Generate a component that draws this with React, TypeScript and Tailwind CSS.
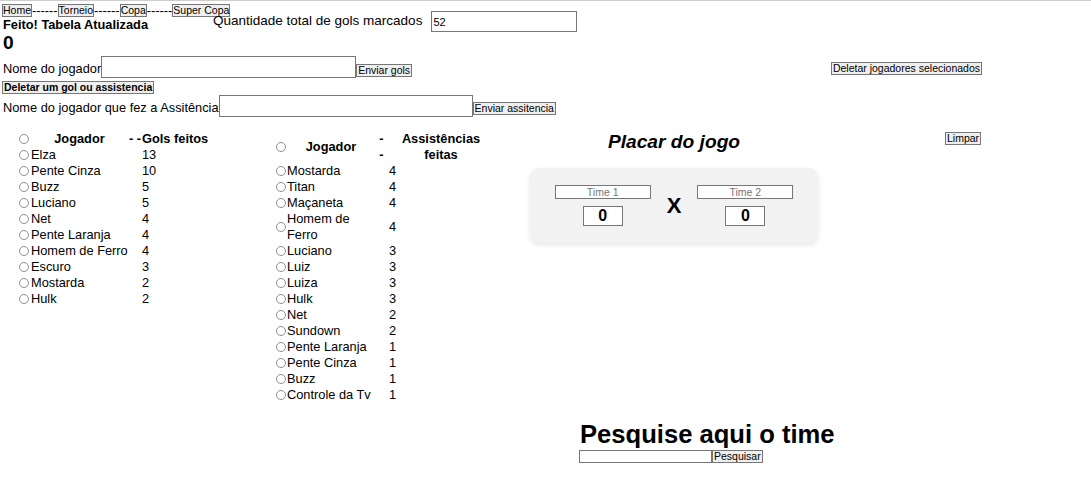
import type { ReactNode } from "react";

const GOLS: [string, number][] = [
  ["Elza", 13],
  ["Pente Cinza", 10],
  ["Buzz", 5],
  ["Luciano", 5],
  ["Net", 4],
  ["Pente Laranja", 4],
  ["Homem de Ferro", 4],
  ["Escuro", 3],
  ["Mostarda", 2],
  ["Hulk", 2],
];

const ASSISTS: [string, number][] = [
  ["Mostarda", 4],
  ["Titan", 4],
  ["Maçaneta", 4],
  ["Homem de Ferro", 4],
  ["Luciano", 3],
  ["Luiz", 3],
  ["Luiza", 3],
  ["Hulk", 3],
  ["Net", 2],
  ["Sundown", 2],
  ["Pente Laranja", 1],
  ["Pente Cinza", 1],
  ["Buzz", 1],
  ["Controle da Tv", 1],
];

function Btn({
  children,
  className = "",
  tight = false,
}: {
  children: ReactNode;
  className?: string;
  tight?: boolean;
}) {
  return (
    <button
      type="button"
      className={`h-[13px] shrink-0 ${tight ? "px-0" : "px-px"} border border-[#767676] bg-[#efefef] text-[10.5px] leading-[11px] text-black whitespace-nowrap ${className}`}
    >
      {children}
    </button>
  );
}

function Radio() {
  return <span className="block w-[10px] h-[10px] rounded-full border border-[#8f8f8f] bg-white" />;
}

function TeamBox({ label }: { label: string }) {
  return (
    <div className="flex flex-col items-center gap-[7px]">
      <input
        readOnly
        placeholder={label}
        className="w-[96px] h-[14px] border border-[#767676] bg-white text-center text-[10.5px] leading-[12px] placeholder:text-[#757575]"
      />
      <input
        readOnly
        defaultValue="0"
        className="w-[40px] h-[20px] border border-[#767676] bg-white text-center text-[16px] font-bold leading-[18px]"
      />
    </div>
  );
}

export default function App() {
  return (
    <div className="w-[1091px] min-h-[498px] bg-white border-t border-[#cccccc] font-['Liberation_Sans',Arial,sans-serif] text-[12.8px] text-black">
      {/* topo */}
      <div className="flex">
        <div className="w-[210px] shrink-0">
          <nav className="mt-[3px] ml-[2px] flex items-center h-[13px] whitespace-nowrap">
            <Btn tight>Home</Btn>
            <span>------</span>
            <Btn tight>Torneio</Btn>
            <span>------</span>
            <Btn tight>Copa</Btn>
            <span>------</span>
            <Btn tight>Super Copa</Btn>
          </nav>
          <div className="mt-px pl-[3px] font-bold leading-[14px]">Feito! Tabela Atualizada</div>
          <div className="pl-[3px] text-[19.2px] font-bold leading-[22px]">0</div>
        </div>
        <div className="ml-[3px] mt-[10px] flex items-center h-[21px]">
          <span className="text-[13.5px] mr-[9px] whitespace-nowrap">Quantidade total de gols marcados</span>
          <input
            readOnly
            defaultValue="52"
            className="w-[146px] h-[21px] border border-[#767676] bg-white pl-px text-[11px]"
          />
        </div>
      </div>

      {/* formulario */}
      <div className="mt-[2px] flex w-[982px] items-end">
        <span className="leading-[15px] mb-[2px] pl-[3px] whitespace-nowrap">Nome do jogador</span>
        <input readOnly className="w-[255px] h-[22px] border border-[#767676] bg-white" />
        <Btn className="mb-px">Enviar gols</Btn>
        <Btn className="ml-auto self-start mt-[6px]">Deletar jogadores selecionados</Btn>
      </div>
      <div className="mt-[3px] pl-[2px] flex">
        <Btn className="font-bold">Deletar um gol ou assistencia</Btn>
      </div>
      <div className="mt-px flex items-end">
        <span className="leading-[15px] mb-[2px] pl-[3px] whitespace-nowrap">
          Nome do jogador que fez a Assitência
        </span>
        <input readOnly className="w-[254px] h-[22px] border border-[#767676] bg-white" />
        <Btn className="mb-[2px]">Enviar assitencia</Btn>
      </div>

      {/* tabelas + placar */}
      <div className="mt-[14px] flex items-start">
        <div className="ml-[18px] grid grid-cols-[12px_99px_13px_70px] items-center leading-[16px] shrink-0">
          <div className="pl-px"><Radio /></div>
          <div className="font-bold text-center">Jogador</div>
          <div className="font-bold whitespace-nowrap">- -</div>
          <div className="font-bold whitespace-nowrap">Gols feitos</div>
          {GOLS.map(([nome, n]) => (
            <div key={nome} className="contents">
              <div className="pl-px"><Radio /></div>
              <div className="pl-px">{nome}</div>
              <div />
              <div>{n}</div>
            </div>
          ))}
        </div>

        <div className="ml-[63px] grid grid-cols-[12px_88px_13px_106px] items-center leading-[16px] shrink-0">
          <div className="pl-px"><Radio /></div>
          <div className="font-bold text-center">Jogador</div>
          <div className="font-bold text-center">
            -<br />-
          </div>
          <div className="font-bold text-center">Assistências feitas</div>
          {ASSISTS.map(([nome, n]) => (
            <div key={nome} className="contents">
              <div className="pl-px"><Radio /></div>
              <div>{nome}</div>
              <div />
              <div className="pl-px">{n}</div>
            </div>
          ))}
        </div>

        <div className="ml-[36px] w-[288px] shrink-0">
          <h2 className="text-center text-[19.2px] font-bold italic leading-[22px]">Placar do jogo</h2>
          <div className="mt-[15px] h-[75px] rounded-[9px] bg-[#f2f2f2] shadow-[0_2px_5px_rgba(0,0,0,0.1)] flex items-center justify-center gap-[16px]">
            <TeamBox label="Time 1" />
            <span className="text-[22px] font-bold leading-none">X</span>
            <TeamBox label="Time 2" />
          </div>
        </div>

        <Btn className="ml-[127px] mt-px">Limpar</Btn>
      </div>

      {/* pesquisa */}
      <h1 className="mt-[16px] ml-[580px] text-[25.6px] font-bold leading-[30px] whitespace-nowrap">
        Pesquise aqui o time
      </h1>
      <div className="mt-px ml-[579px] flex items-end">
        <input readOnly className="w-[133px] h-[13px] border border-[#767676] bg-white" />
        <Btn>Pesquisar</Btn>
      </div>
    </div>
  );
}
